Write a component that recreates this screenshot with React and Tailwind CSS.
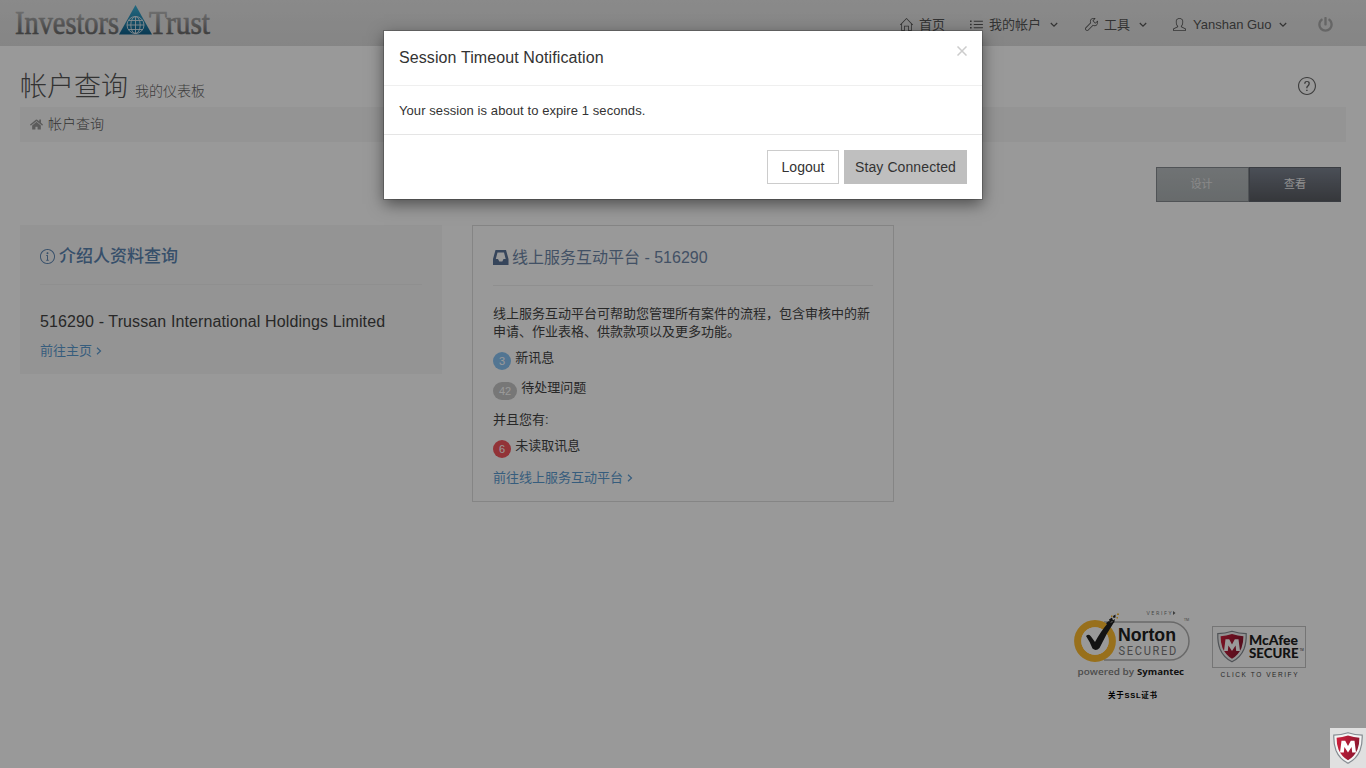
import React from "react";
import { SlHome, SlWrench, SlUser, SlQuestion, SlInfo, SlList } from "react-icons/sl";
import { FaPowerOff, FaHome } from "react-icons/fa";

const Chevron = ({ right, className = "" }) => (
  <svg viewBox="0 0 8 8" className={"w-2 h-2 shrink-0 " + className} fill="none" stroke="currentColor" strokeWidth="1.2">
    <path d={right ? "M2 0.8 5.5 4 2 7.2" : "M0.8 2 4 5.2 7.2 2"} />
  </svg>
);

const Logo = () => (
  <svg width="204" height="44" viewBox="0 0 204 44" className="block overflow-visible">
    <defs>
      <linearGradient id="lt" x1="0" y1="10" x2="0" y2="35" gradientUnits="userSpaceOnUse">
        <stop offset="0" stopColor="#bcbcbc" />
        <stop offset="1" stopColor="#666" />
      </linearGradient>
      <linearGradient id="tri" x1="0" y1="5" x2="0" y2="34" gradientUnits="userSpaceOnUse">
        <stop offset="0" stopColor="#3db1d8" />
        <stop offset="1" stopColor="#11638d" />
      </linearGradient>
    </defs>
    <g fontFamily="Liberation Serif, serif" fontSize="34" fill="url(#lt)" stroke="url(#lt)" strokeWidth="0.7">
      <text x="0" y="34.300" textLength="104" lengthAdjust="spacingAndGlyphs">Investors</text>
      <text x="134" y="34.300" textLength="61" lengthAdjust="spacingAndGlyphs">Trust</text>
    </g>
    <path d="M120.500 5 137 34.500H104z" fill="url(#tri)" />
    <g fill="none" stroke="#dfe9ee" strokeWidth="0.9">
      <circle cx="120.500" cy="25" r="8.500" />
      <ellipse cx="120.500" cy="25" rx="4.700" ry="8.500" />
      <path d="M120.500 16.500v17M112 25h17M113.500 20.500h14M113.500 29.500h14" />
    </g>
  </svg>
);

const Shield = ({ id }) => (
  <>
    <defs>
      <linearGradient id={id} x1="0" y1="0" x2="1" y2="0.300">
        <stop offset="0" stopColor="#d01f3c" />
        <stop offset="1" stopColor="#8e1730" />
      </linearGradient>
    </defs>
    <path d="M0.800 3.200Q8 3 15 0.700 22 3 29.200 3.200Q29.500 12 27 18.500 23.500 27 15 31.300 6.500 27 3 18.500 0.500 12 0.800 3.200z" fill="#f4f4f4" stroke="#858b91" strokeWidth="1.200" />
    <path d="M3.600 5.700Q9 5.500 15 3.600 21 5.500 26.400 5.700 26.500 12 24.500 17.500 21.500 24.500 15 28.300 8.500 24.500 5.500 17.500 3.500 12 3.600 5.700z" fill={`url(#${id})`} />
    <path d="M8.500 8.700h3.700L15 14l2.800-5.300h3.700L23 20.500h-3.800l-.6-5.500L15 20.500 11.400 15l-.6 5.500H7z" fill="#fff" />
  </>
);

const Norton = () => (
  <svg width="120" height="92" viewBox="0 0 120 92" className="block">
    <g fontFamily="Open Sans, sans-serif">
      <text x="74.500" y="6" fontSize="5.500" fill="#777" textLength="25">VERIFY</text>
      <path d="M101 2l2.500 2-2.500 2z" fill="#666" />
      <path d="M32 13H98a19 19 0 0 1 0 38H32" fill="none" stroke="#b0b0b0" strokeWidth="1.500" />
      <circle cx="23" cy="32" r="17.300" fill="none" stroke="#fdbb30" strokeWidth="7.200" />
      <circle cx="23" cy="32" r="13.700" fill="#fff" />
      <path d="M14 27Q17 24.500 19 27.500L23 33Q29 22 35.500 14.500L42.500 12.500Q34 25 27.500 39 24 42.500 20.500 39.500 17.500 32 14 27z" fill="#202020" />
      <path d="M34 14l3-2 2 2-3 3zM37 10.500l3-2 1 3-3 2zM40 12l3-2-1 4zM41 7l2.500-1.500v3L41.500 9z" fill="#202020" />
      <path d="M39 6.500h1.500v1.500H39zM44.500 8H46v1.500h-1.500zM45 4.500h2v1.500h-2z" fill="#fdbb30" />
      <text x="46" y="31.500" fontFamily="Liberation Sans, sans-serif" fontSize="19" fontWeight="700" fill="#202020" textLength="58" lengthAdjust="spacingAndGlyphs">Norton</text>
      <g transform="translate(46.500 45.500) scale(0.850 1)">
        <text x="0" y="0" fontFamily="Roboto, sans-serif" fontSize="13" fill="#777" textLength="68">SECURED</text>
      </g>
      <text x="112" y="12" fontSize="3.500" fill="#666">TM</text>
      <text x="5.500" y="66" fontSize="9.500" fontWeight="600" fill="#808080" textLength="56.500" lengthAdjust="spacingAndGlyphs">powered by</text>
      <text x="65" y="66" fontSize="9.500" fontWeight="700" fill="#202020" textLength="47" lengthAdjust="spacingAndGlyphs">Symantec</text>
    </g>
    <text x="36" y="89.300" fontSize="7.500" fontWeight="700" fill="#000" fontFamily="Liberation Sans, Noto Sans CJK SC, sans-serif" textLength="49">关于SSL证书</text>
  </svg>
);

const McAfee = () => (
  <svg width="96" height="54" viewBox="0 0 96 54" className="block">
    <rect x="0.500" y="0.500" width="93" height="41" fill="none" stroke="#c4c4c4" />
    <g transform="translate(5 4.500)"><Shield id="sh1" /></g>
    <g fontFamily="Lato, sans-serif" fontWeight="900" fill="#202020">
      <text x="37" y="18.800" fontSize="13" textLength="49" lengthAdjust="spacingAndGlyphs">McAfee</text>
      <text x="37" y="32.300" fontSize="12.500" textLength="49.500" lengthAdjust="spacingAndGlyphs">SECURE</text>
    </g>
    <text x="87.500" y="25" fontSize="3" fill="#333">TM</text>
    <text x="8.500" y="50.700" fontSize="6.500" fill="#444" fontFamily="Liberation Sans, sans-serif" textLength="77">CLICK TO VERIFY</text>
  </svg>
);

const Badge = ({ color, children }) => (
  <span className={"flex h-[18px] items-center justify-center rounded-full px-1.5 text-[11px] leading-[16px] pb-px font-light text-white " + color}>{children}</span>
);

export default function App() {
  return (
    <div className="relative h-[768px] w-[1366px] overflow-hidden bg-white font-['Liberation_Sans','Noto_Sans_CJK_SC',sans-serif] text-[13px] text-[#444]">
      <header className="flex h-[46px] items-center bg-linear-to-b from-[#e6e6e6] to-[#dedede] text-[#555]">
        <div className="w-[900px] shrink-0 self-start pl-[15px]"><Logo /></div>
        <nav className="flex items-center pt-[3px] whitespace-nowrap">
          <div className="flex w-[70px] items-center gap-[6px]"><SlHome className="size-[13px]" />首页</div>
          <div className="flex w-[115px] items-center gap-[6px]"><SlList className="size-[13px]" />我的帐户<Chevron className="ml-[3px]" /></div>
          <div className="flex w-[88px] items-center gap-[6px]"><SlWrench className="size-[13px]" />工具<Chevron className="ml-[3px]" /></div>
          <div className="flex w-[145px] items-center gap-[7px]"><SlUser className="size-[13px]" /><span className="w-[79px]">Yanshan Guo</span><Chevron /></div>
          <FaPowerOff className="size-[15px] text-[#aaa]" />
        </nav>
      </header>

      <div className="flex h-[60px] items-end justify-between px-5">
        <h1 className="flex translate-y-[5px] items-baseline gap-[7px] text-[27px] leading-[40px] font-light text-[#555]">
          帐户查询 <small className="text-[14px] font-light text-[#666]">我的仪表板</small>
        </h1>
        <SlQuestion className="mr-[30px] mb-[11px] size-[18px] text-[#666]" />
      </div>
      <div className="mx-5 mt-px flex h-[35px] items-center gap-[5px] bg-[#f7f7f7] pl-[10px] text-[14px] font-light text-[#555]">
        <FaHome className="size-[13px] text-[#999]" />帐户查询
      </div>

      <div className="mt-[25px] flex justify-end pr-[25px] text-[11px] text-[#f0f0f0]">
        <div className="flex h-[35px] w-[93px] items-center justify-center border border-[#868a8f] bg-linear-to-b from-[#bbc0c2] to-[#acb2b4] pr-0.5 text-[#e6e6e6]">设计</div>
        <div className="flex h-[35px] w-[92px] items-center justify-center border border-[#61666e] bg-linear-to-b from-[#7d8491] to-[#5a5d63]">查看</div>
      </div>

      <main className="mt-[23px] flex items-start gap-[30px] px-5">
        <section className="h-[149px] w-[422px] bg-[#f7f7f7] px-5">
          <h2 className="flex h-[60px] items-center gap-1 border-b border-[#eee] pt-[3px] text-[17px] leading-none font-medium text-[#5b84b1]">
            <SlInfo className="size-[15px]" />介绍人资料查询
          </h2>
          <p className="mt-[26px] text-[16px] leading-[21px] tracking-[0.115px] whitespace-nowrap">516290 - Trussan International Holdings Limited</p>
          <a className="mt-[10px] flex items-center gap-[3px] leading-[18px] text-[#5b9bd1]">前往主页<Chevron right /></a>
        </section>
        <section className="h-[277px] w-[422px] border border-[#dedede] px-5">
          <h2 className="flex h-[60px] items-center gap-[3px] border-b border-[#eee] pt-[4px] text-[16px] leading-none text-[#6f87a8]">
            <svg viewBox="0 0 16 15" className="h-[15px] w-4 text-[#5b7398]" fill="currentColor"><path fillRule="evenodd" d="M2.500 0h10.500l2.500 9v6H0V9zM4.500 2.500 2.800 9H5l1.300 2.500h3L10.500 9h2.200L11 2.500z" /></svg>
            <span>线上服务互动平台 - 516290</span>
          </h2>
          <p className="mt-[19px] leading-[18px] whitespace-nowrap">线上服务互动平台可帮助您管理所有案件的流程，包含审核中的新<br />申请、作业表格、供款款项以及更多功能。</p>
          <div className="mt-[11px] flex h-[18px] gap-[4px] leading-[12px]"><Badge color="bg-[#89c4f4]">3</Badge>新讯息</div>
          <div className="mt-[12px] flex h-[18px] gap-[4px] leading-[12px]"><Badge color="bg-[#c6c6c6]">42</Badge>待处理问题</div>
          <p className="mt-[11px] leading-[18px]">并且您有:</p>
          <div className="mt-[11px] flex h-[18px] gap-[4px] leading-[12px]"><Badge color="bg-[#f3565d]">6</Badge>未读取讯息</div>
          <a className="mt-[11px] flex items-center gap-[3px] leading-[18px] text-[#5b9bd1]">前往线上服务互动平台<Chevron right /></a>
        </section>
      </main>

      <footer className="mt-[107px] flex justify-end gap-[20px] pr-[58px]">
        <Norton />
        <div className="pt-[17px]"><McAfee /></div>
      </footer>

      <div className="absolute inset-0 bg-black/40" />

      <div className="absolute right-0 bottom-0 flex h-10 w-9 items-center justify-center bg-[#e0e0e0]">
        <svg viewBox="0 0 30 32" className="h-8 w-[30px]"><Shield id="sh2" /></svg>
      </div>

      <div role="dialog" className="absolute top-[31px] left-[384px] w-[598px] bg-white text-[#333] shadow-[0_5px_15px_rgba(0,0,0,0.5),0_0_0_1px_rgba(0,0,0,0.2)]">
        <div className="flex h-[55px] items-start justify-between border-b border-[#efefef] px-[15px]">
          <h4 className="pt-[15px] text-[16px] leading-[24px] tracking-[0.1px]">Session Timeout Notification</h4>
          <svg viewBox="0 0 10 10" className="mt-[15px] size-[10px]" stroke="#ccc" strokeWidth="1.500"><path d="M0.500 0.500 9.500 9.500M9.500 0.500 0.500 9.500" /></svg>
        </div>
        <div className="h-[49px] border-b border-[#e5e5e5] px-[15px] pt-[15px] leading-[19px] tracking-[0.08px]">Your session is about to expire 1 seconds.</div>
        <div className="flex h-16 justify-end gap-[5px] px-[15px] pt-[15px] text-[14px]">
          <button className="h-[34px] w-[72px] border border-[#ccc]">Logout</button>
          <button className="h-[34px] w-[123px] bg-[#bfbfbf] tracking-[0.1px]">Stay Connected</button>
        </div>
      </div>
    </div>
  );
}
